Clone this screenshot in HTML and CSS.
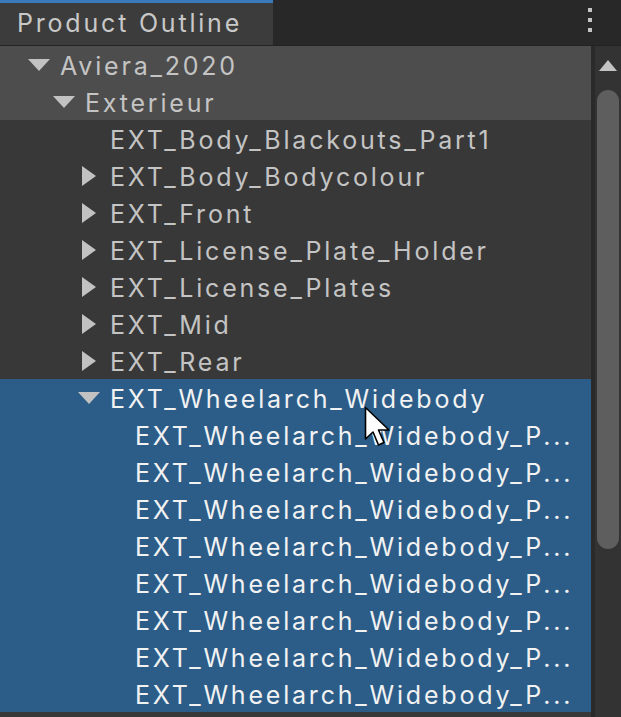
FILE: index.html
```html
<html>
  <head>
    <title>Product Outline</title>
    <link rel="stylesheet" href="styles.css">
  </head>
  <body>
    <div class="outline_window">
      <div class="outline_tabbar">
        <div class="outline_tab">Product Outline</div>
        <div class="outline_tabbar_fill"></div>
        <div class="outline_menu">
          <span></span><span></span><span></span>
        </div>
      </div>

      <div class="outline_body">
        <div class="outline_tree">
          <div class="outline_row outline_parent outline_level0"><span class="outline_toggle outline_open"></span><span class="outline_label">Aviera_2020</span></div>
          <div class="outline_row outline_parent outline_level1"><span class="outline_toggle outline_open"></span><span class="outline_label">Exterieur</span></div>
          <div class="outline_row outline_level2"><span class="outline_toggle"></span><span class="outline_label">EXT_Body_Blackouts_Part1</span></div>
          <div class="outline_row outline_level2"><span class="outline_toggle outline_closed"></span><span class="outline_label">EXT_Body_Bodycolour</span></div>
          <div class="outline_row outline_level2"><span class="outline_toggle outline_closed"></span><span class="outline_label">EXT_Front</span></div>
          <div class="outline_row outline_level2"><span class="outline_toggle outline_closed"></span><span class="outline_label">EXT_License_Plate_Holder</span></div>
          <div class="outline_row outline_level2"><span class="outline_toggle outline_closed"></span><span class="outline_label">EXT_License_Plates</span></div>
          <div class="outline_row outline_level2"><span class="outline_toggle outline_closed"></span><span class="outline_label">EXT_Mid</span></div>
          <div class="outline_row outline_level2"><span class="outline_toggle outline_closed"></span><span class="outline_label">EXT_Rear</span></div>
          <div class="outline_selection">
            <div class="outline_row outline_level2"><span class="outline_toggle outline_open"></span><span class="outline_label">EXT_Wheelarch_Widebody</span></div>
            <div class="outline_row outline_level3"><span class="outline_toggle"></span><span class="outline_label">EXT_Wheelarch_Widebody_P...</span></div>
            <div class="outline_row outline_level3"><span class="outline_toggle"></span><span class="outline_label">EXT_Wheelarch_Widebody_P...</span></div>
            <div class="outline_row outline_level3"><span class="outline_toggle"></span><span class="outline_label">EXT_Wheelarch_Widebody_P...</span></div>
            <div class="outline_row outline_level3"><span class="outline_toggle"></span><span class="outline_label">EXT_Wheelarch_Widebody_P...</span></div>
            <div class="outline_row outline_level3"><span class="outline_toggle"></span><span class="outline_label">EXT_Wheelarch_Widebody_P...</span></div>
            <div class="outline_row outline_level3"><span class="outline_toggle"></span><span class="outline_label">EXT_Wheelarch_Widebody_P...</span></div>
            <div class="outline_row outline_level3"><span class="outline_toggle"></span><span class="outline_label">EXT_Wheelarch_Widebody_P...</span></div>
            <div class="outline_row outline_level3"><span class="outline_toggle"></span><span class="outline_label">EXT_Wheelarch_Widebody_P...</span></div>
          </div>
        </div>

        <div class="outline_scrollbar">
          <div class="outline_scroll_up"></div>
          <div class="outline_scroll_thumb"></div>
        </div>
      </div>

      <!-- mouse pointer over the selection -->
      <svg class="outline_cursor" width="30" height="44" viewBox="0 0 30 44">
        <path d="M1.5 1.5 L1.5 33 L9 26 L14.5 39 L20 36.5 L14.5 24 L25 24 Z" fill="#ffffff" stroke="#000000" stroke-width="1.6" stroke-linejoin="round"/>
      </svg>
    </div>
  </body>
</html>
```

FILE: styles.css
```css
body
  {
  margin: 0;
  background: #383838;
  font-family: "Inter", "Noto Sans", sans-serif;
  font-size: 25px;
  letter-spacing: 2.8px;
  color: #c4c4c4;
  }

.outline_window
  {
  position: relative;
  width: 621px;
  height: 717px;
  display: flex;
  flex-direction: column;
  overflow: hidden;
  }

.outline_tabbar
  {
  height: 45px;
  display: flex;
  background: #282828;
  border-bottom: 1px solid #232323;
  }

.outline_tab
  {
  width: 256px;
  padding-left: 17px;
  background: #3c3c3c;
  border-top: 3px solid #3a79bb;
  line-height: 40px;
  color: #c8c8c8;
  }

.outline_tabbar_fill
  {
  flex: 1;
  }

.outline_menu
  {
  width: 33px;
  display: flex;
  flex-direction: column;
  align-items: flex-start;
  padding-top: 8px;
  padding-left: 1px;
  gap: 6px;
  }

.outline_menu span
  {
  width: 4px;
  height: 4px;
  background: #c4c4c4;
  }

.outline_body
  {
  flex: 1;
  display: flex;
  }

.outline_tree
  {
  width: 591px;
  }

.outline_row
  {
  height: 37px;
  display: flex;
  align-items: center;
  white-space: nowrap;
  }

.outline_parent
  {
  background: #4d4d4d;
  }

.outline_selection
  {
  background: #2c5d88;
  color: #f2f2f2;
  }

.outline_level0 { padding-left: 28px; }
.outline_level1 { padding-left: 53px; }
.outline_level2 { padding-left: 78px; }
.outline_level3 { padding-left: 103px; }

.outline_toggle
  {
  width: 22px;
  height: 22px;
  margin-right: 10px;
  display: flex;
  align-items: center;
  justify-content: center;
  flex-shrink: 0;
  }

.outline_open::before
  {
  content: "";
  border-left: 11px solid transparent;
  border-right: 11px solid transparent;
  border-top: 12px solid #c2c2c2;
  }

.outline_closed::before
  {
  content: "";
  border-top: 10px solid transparent;
  border-bottom: 10px solid transparent;
  border-left: 14px solid #c2c2c2;
  }

.outline_label
  {
  position: relative;
  top: 1px;
  }

.outline_scrollbar
  {
  width: 26px;
  background: #333333;
  border-left: 4px solid #2a2a2a;
  display: flex;
  flex-direction: column;
  align-items: center;
  }

.outline_scroll_up
  {
  margin-top: 14px;
  border-left: 9px solid transparent;
  border-right: 9px solid transparent;
  border-bottom: 11px solid #c4c4c4;
  }

.outline_scroll_thumb
  {
  margin-top: 19px;
  width: 22px;
  height: 459px;
  background: #5e5e5e;
  border-radius: 11px;
  }

.outline_cursor
  {
  position: absolute;
  left: 364px;
  top: 406px;
  }
```
